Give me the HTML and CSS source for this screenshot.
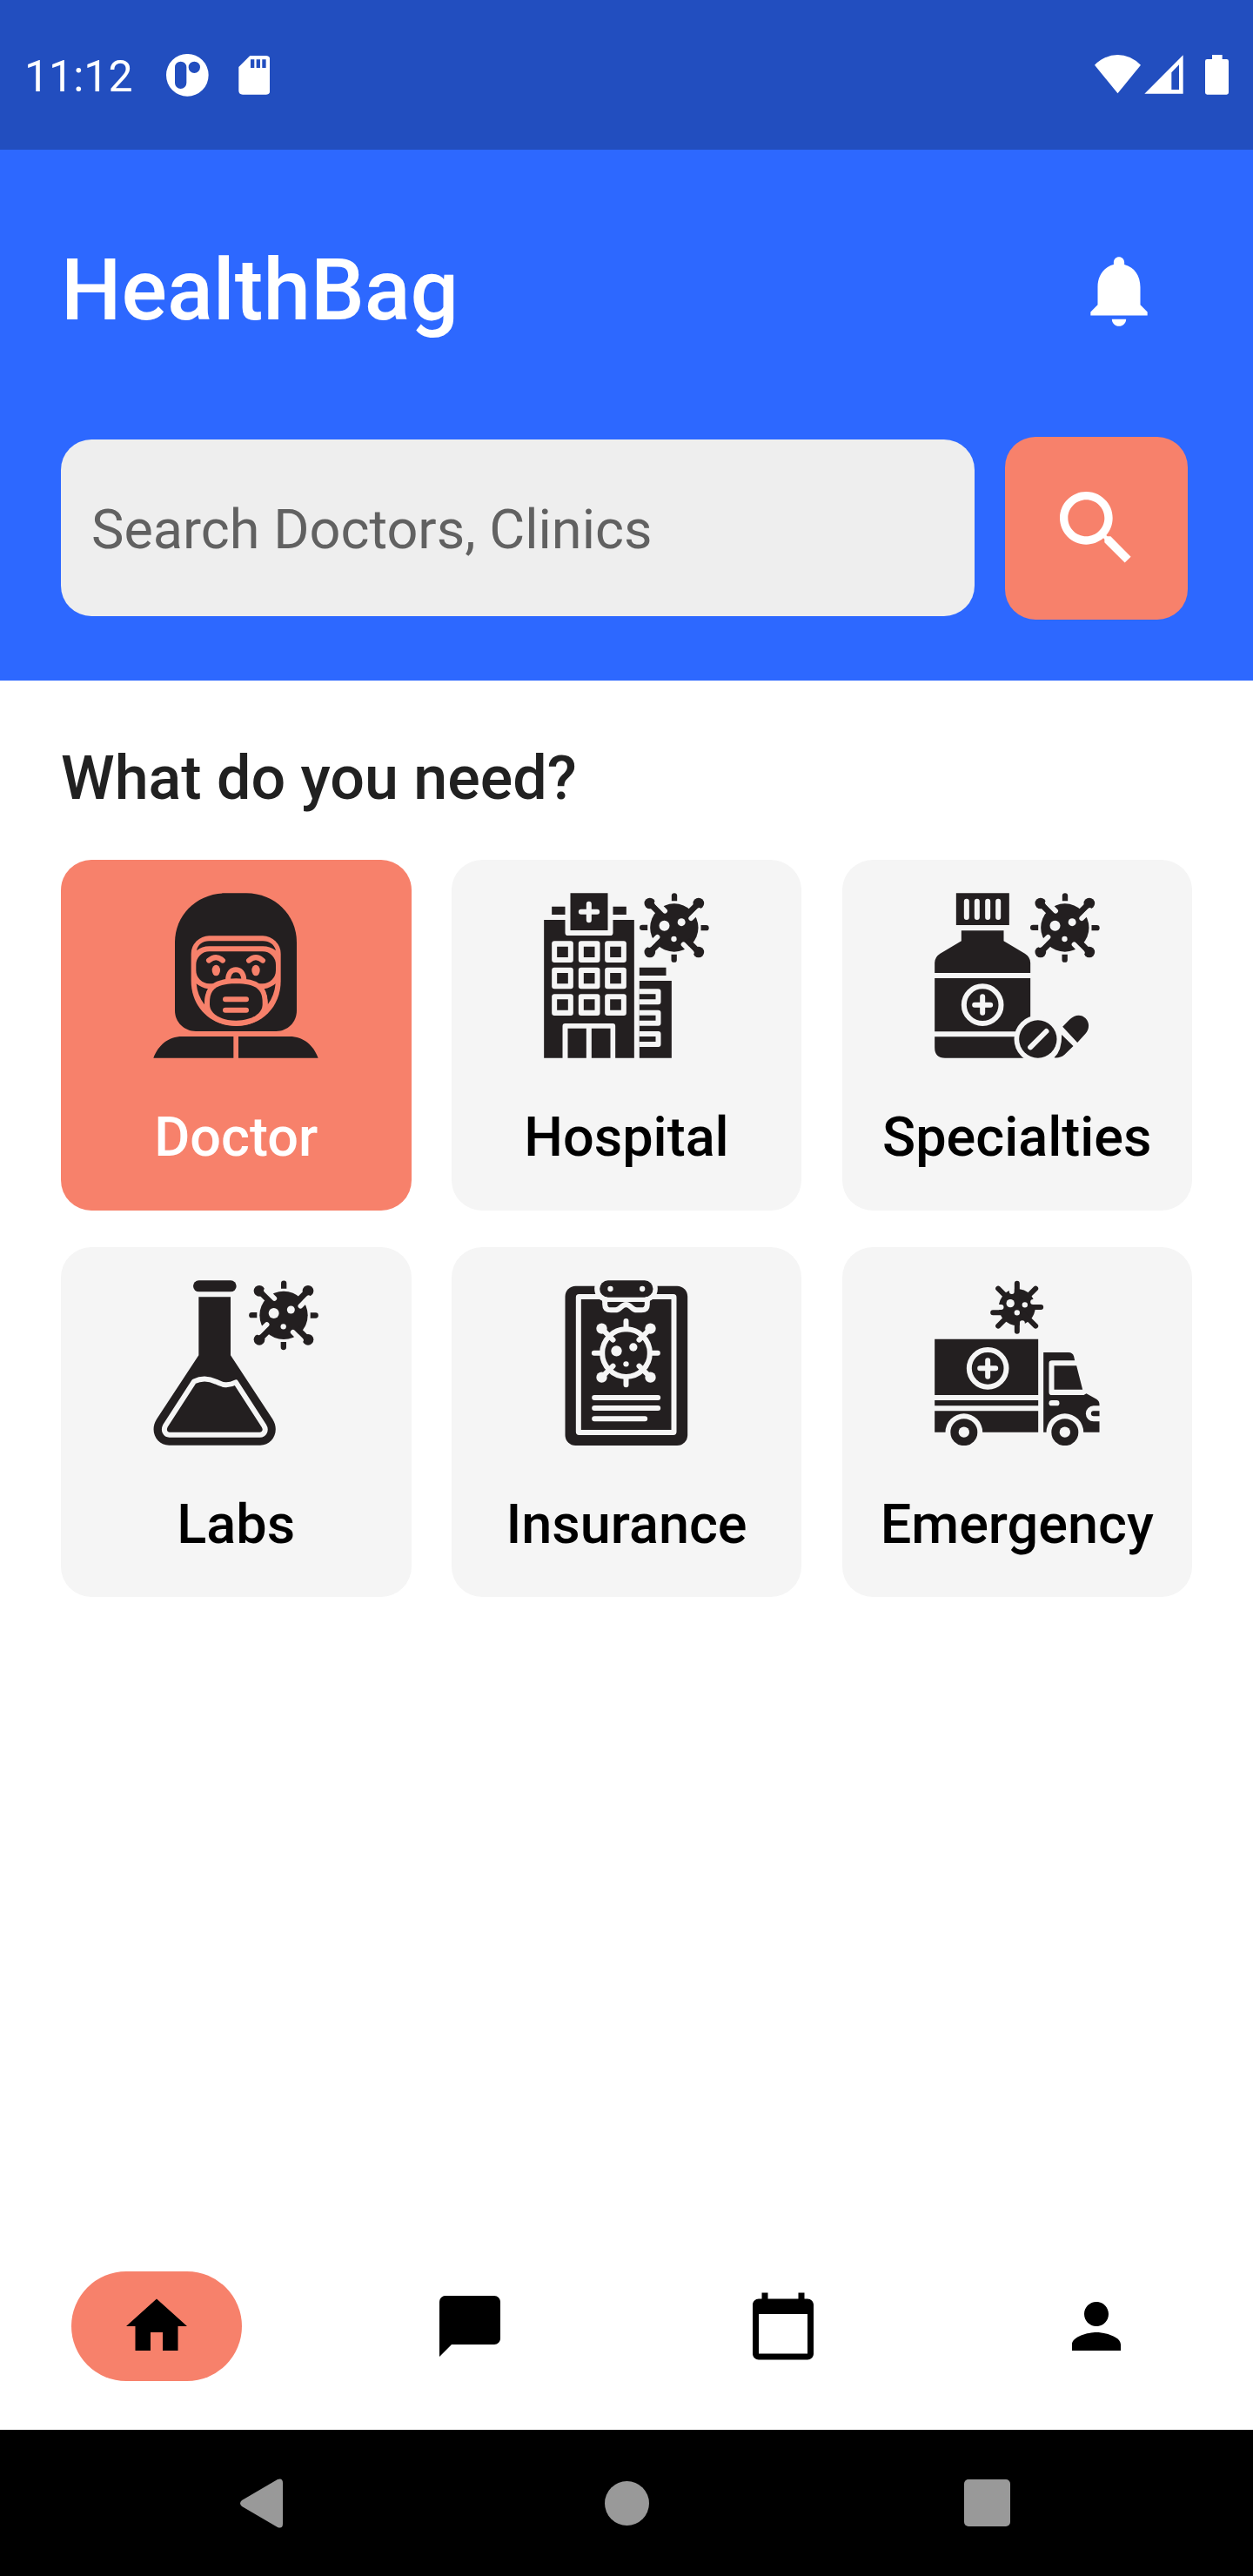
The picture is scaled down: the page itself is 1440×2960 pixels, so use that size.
FILE: index.html
```html
<!DOCTYPE html>
<html lang="en">
<head>
<meta charset="utf-8">
<title>HealthBag</title>
<link rel="stylesheet" href="styles.css">
</head>
<body>
<svg class="defs" aria-hidden="true">
  <defs>
    <g id="spike">
      <circle cx="-84" cy="-84" r="19"/>
      <path class="stem" d="M-84-84L-45-45"/>
      <path class="notch" d="M-60-86L-32-58"/>
      <path d="M-9-92V-110a9.500 9.500 0 0 1 19 0V-92z"/>
    </g>
    <g id="virus">
      <circle r="83"/>
      <use href="#spike"/>
      <use href="#spike" transform="rotate(90)"/>
      <use href="#spike" transform="rotate(180)"/>
      <use href="#spike" transform="rotate(270)"/>
      <g class="cut"><circle cx="-34" cy="-7" r="18"/><circle cx="25" cy="-19" r="13.500"/><circle cx="-1" cy="39" r="9.500"/></g>
    </g>
  </defs>
</svg>

<div class="status">
  <span class="clock">11:12</span>
  <svg class="status-left" viewBox="573 96 358 147">
    <path fill-rule="evenodd" d="M573 169a73 73 0 1 0 146 0a73 73 0 1 0-146 0zM603 142a20 20 0 0 1 40 0V196a20 20 0 0 1-40 0zM650 142a20 20 0 1 0 40 0a20 20 0 1 0-40 0z"/>
    <path fill-rule="evenodd" d="M862 102H917q14 0 14 14V222q0 14-14 14H837q-14 0-14-14V141zM864 115V144H877V115zM884 115V144H897V115zM904 115V144H917V115z"/>
  </svg>
  <svg class="status-right" viewBox="114 99 462 137">
    <path d="M114 134Q150 99 193.500 99T273 134L193.500 232z"/>
    <path fill-rule="evenodd" d="M286 233L419 100V233zM379 160V219H405V133z"/>
    <path d="M519 99H554V114H569q7 0 7 7V229q0 7-7 7H502q-7 0-7-7V121q0-7 7-7H519z"/>
  </svg>
</div>

<header class="header">
  <div class="title-row">
    <h1 class="title">HealthBag</h1>
    <svg class="bell" viewBox="0 0 24 24"><path d="M12 22c1.100 0 2-.9 2-2h-4c0 1.100.89 2 2 2zm6-6v-5c0-3.070-1.640-5.640-4.500-6.320V4c0-.83-.67-1.500-1.500-1.500s-1.500.67-1.500 1.500v.68C7.630 5.360 6 7.920 6 11v5l-2 2v1h16v-1l-2-2z"/></svg>
  </div>
  <div class="search-row">
    <div class="search-field">Search Doctors, Clinics</div>
    <div class="search-button">
      <svg viewBox="0 0 24 24"><path d="M15.500 14h-.79l-.28-.27C15.410 12.590 16 11.110 16 9.500 16 5.910 13.090 3 9.500 3S3 5.910 3 9.500 5.910 16 9.500 16c1.610 0 3.090-.59 4.230-1.570l.27.28v.79l5 4.990L20.490 19l-4.990-5zm-6 0C7.010 14 5 11.990 5 9.500S7.010 5 9.500 5 14 7.010 14 9.500 11.990 14 9.500 14z"/></svg>
    </div>
  </div>
</header>

<main class="main">
  <h2 class="heading">What do you need?</h2>
  <div class="grid">
    <div class="card card-active">
      <svg class="icon" viewBox="348 137 570 570">
        <path d="M423 307C423 213 499 138 597 138H669C767 138 843 213 843 307V543C843 583 812 614 772 614H495C455 614 423 583 423 543z"/>
        <path d="M349 706C366 662 400 632 448 632H625V706zM642 632H818C866 632 901 662 917 706H642z"/>
        <path class="cut" d="M479 347a62 62 0 0 1 62-62H726a62 62 0 0 1 62 62V440C788 530 722 596 634 596S479 530 479 440z"/>
        <path d="M498 336C502 316 518 303 541 303H726C750 303 766 316 771 336C757 326 743 321 726 321H541C524 321 511 326 498 336z"/>
        <rect x="496" y="339" width="275" height="111" rx="46"/>
        <path d="M497 450Q513 464 538 468Q525 490 525 522Q501 492 497 450zM770 450Q754 464 730 468Q743 490 743 522Q766 492 770 450z"/>
        <path class="line" d="M606 440C606 411 620 402 633 402S661 411 661 440"/>
        <path class="mask" d="M543 515C543 470 565 450 634 450S725 470 725 515V522C725 552 690 577 634 577S543 552 543 522z"/>
        <path class="line" d="M597 504H669M597 541H669M540 370Q565 349 588 370M678 370Q702 349 726 370"/>
        <g class="cut"><ellipse cx="565" cy="404" rx="14" ry="19"/><ellipse cx="702" cy="404" rx="14" ry="19"/></g>
      </svg>
      <span class="label">Doctor</span>
    </div>

    <div class="card">
      <svg class="icon" viewBox="75.500 47 570 570">
        <path d="M76 140H149V184q0 10 10 10H304q10 0 10-10V140H387V616H322V506q0-9-9-9H149q-9 0-9 9V616H76z"/>
        <path d="M158 514h64v102h-64zM240 514h65v102h-65zM167 48h129v128H167zM103 94h46v28h-46zM314 94h46v28h-46zM405 304h92v28h-92zM405 350h111v266H405z"/>
        <path class="line" d="M231 85V141M204 112H259"/>
        <g class="cut">
          <rect x="103" y="213" width="74" height="74" rx="9"/><rect x="195" y="213" width="74" height="74" rx="9"/><rect x="286" y="213" width="74" height="74" rx="9"/>
          <rect x="103" y="304" width="74" height="74" rx="9"/><rect x="195" y="304" width="74" height="74" rx="9"/><rect x="286" y="304" width="74" height="74" rx="9"/>
          <rect x="103" y="396" width="74" height="74" rx="9"/><rect x="195" y="396" width="74" height="74" rx="9"/><rect x="286" y="396" width="74" height="74" rx="9"/>
          <path d="M405 378H470q9 0 9 9V423q0 9-9 9H405zM405 451H470q9 0 9 9V496q0 9-9 9H405zM405 524H470q9 0 9 9V569q0 9-9 9H405z"/>
        </g>
        <path d="M121 232h38v37h-38zM213 232h38v37h-38zM304 232h38v37h-38zM121 323h38v37h-38zM213 323h38v37h-38zM304 323h38v37h-38zM121 414h38v37h-38zM213 414h38v37h-38zM304 414h38v37h-38zM405 396h56v18h-56zM405 469h56v18h-56zM405 542h56v18h-56z"/>
        <use href="#virus" x="525" y="167"/>
      </svg>
      <span class="label">Hospital</span>
    </div>

    <div class="card">
      <svg class="icon" viewBox="71.500 47 570 570">
        <path d="M146 48h183v110H146zM164 177H310V213L383 256Q402 268 402 288V323H72V288Q72 268 91 256L164 213zM72 341h330v184H72zM72 543H402V616H108Q72 616 72 580z"/>
        <path class="line" d="M182 76V131M218 76V131M255 76V131M291 76V131M237 405V460M210 433H264"/>
        <circle class="line" cx="237" cy="433" r="64"/>
        <circle class="cut" cx="428" cy="551" r="82"/>
        <circle cx="428" cy="551" r="65"/>
        <path class="line" d="M402 579L457 524"/>
        <path d="M513 508L538 483C554 466 578 464 592 479C607 494 606 517 592 532L564 563zM510 536L550 575L520 604Q505 617 484 615Q511 590 510 536z"/>
        <use href="#virus" x="521" y="167"/>
      </svg>
      <span class="label">Specialties</span>
    </div>

    <div class="card">
      <svg class="icon" viewBox="78 59 570 570">
        <rect x="216" y="60" width="149" height="39" rx="19.500"/>
        <path d="M235 117H345V318L490 538C516 580 490 628 447 628H133C90 628 64 580 90 538L235 318z"/>
        <path class="line" d="M219 408C250 393 276 400 295 409C318 421 335 425 363 411L460 561C470 577 460 592 446 592H134C120 592 112 577 120 561z"/>
        <use href="#virus" x="528" y="180"/>
      </svg>
      <span class="label">Labs</span>
    </div>

    <div class="card">
      <svg class="icon" viewBox="75.500 59 570 570">
        <rect x="149" y="79" width="422" height="550" rx="36"/>
        <rect class="line" x="195" y="116" width="329" height="468" rx="2"/>
        <rect class="cut" x="250" y="42" width="218" height="93" rx="46"/>
        <path class="cut" d="M277 117H441V134H277z"/>
        <rect x="268" y="60" width="184" height="58" rx="29"/>
        <g class="cut"><circle cx="305" cy="89" r="9.500"/><circle cx="415" cy="89" r="9.500"/></g>
        <path d="M295 134H423V152H295z"/>
        <path class="line" d="M286 125V142Q286 162 306 162H322C340 162 340 144 359 143C378 144 378 162 396 162H412Q432 162 432 142V125"/>
        <circle class="line" cx="359" cy="310" r="82"/>
        <path class="line" d="M359 200V228M359 392V420M249 310H277M441 310H468M275 226L314 265M443 226L404 265M275 394L314 355M443 394L404 355M250 464H469M250 500H469M250 537H424"/>
        <g class="cut">
          <circle cx="275" cy="226" r="18.500"/><circle cx="443" cy="226" r="18.500"/><circle cx="275" cy="394" r="18.500"/><circle cx="443" cy="394" r="18.500"/>
          <circle cx="326" cy="303" r="18.500"/><circle cx="384" cy="290" r="14"/><circle cx="359" cy="348" r="9.500"/>
        </g>
      </svg>
      <span class="label">Insurance</span>
    </div>

    <div class="card">
      <svg class="icon" viewBox="71.500 59 570 570">
        <path d="M72 262h357v193H72zM72 473h357v19H72zM72 510h357v73H72z"/>
        <path d="M447 308H533Q548 308 552 322L555 336H476q-10 0-10 10V445q0 10 10 10H586L595 450L630 469Q640 475 640 487V492H620a27 27 0 0 0 0 54H640V583H447z"/>
        <path d="M484 354H561L582 436H484zM640 510H620a9 9 0 0 0 0 18H640z"/>
        <rect class="cut" x="466" y="473" width="36" height="19" rx="9.500"/>
        <g class="cut"><circle cx="173" cy="583" r="64"/><circle cx="521" cy="583" r="64"/></g>
        <circle cx="173" cy="583" r="46.500"/><circle cx="521" cy="583" r="46.500"/>
        <g class="cut"><circle cx="173" cy="583" r="18.500"/><circle cx="521" cy="583" r="18.500"/></g>
        <circle class="line" cx="255" cy="363" r="64"/>
        <path class="line" d="M255 336V391M228 363H282"/>
        <circle cx="356" cy="152" r="63"/>
        <path class="line" d="M338 78V98M432 134H411M278 152H301M374 228V207"/>
        <path class="prong" d="M356 70V120M356 235V190M438 152H390M273 171H320M291 88L330 127M420 88L380 128M291 217L330 178M420 217L380 177"/>
        <g class="cut"><circle cx="333" cy="139" r="14"/><circle cx="383" cy="144" r="9.500"/><circle cx="356" cy="171" r="9.500"/></g>
      </svg>
      <span class="label">Emergency</span>
    </div>
  </div>
</main>

<nav class="tabs">
  <div class="tab"><span class="pill"><svg viewBox="0 0 24 24"><path d="M10 20v-6h4v6h5v-8h3L12 3 2 12h3v8z"/></svg></span></div>
  <div class="tab"><svg viewBox="0 0 24 24"><path d="M20 2H4c-1.100 0-2 .9-2 2v18l4-4h14c1.100 0 2-.9 2-2V4c0-1.100-.9-2-2-2z"/></svg></div>
  <div class="tab"><svg viewBox="0 0 24 24"><path d="M20 3h-1V1h-2v2H7V1H5v2H4c-1.100 0-2 .9-2 2v16c0 1.100.9 2 2 2h16c1.100 0 2-.9 2-2V5c0-1.100-.9-2-2-2zm0 18H4V8h16v13z"/></svg></div>
  <div class="tab"><svg viewBox="0 0 24 24"><path d="M12 12c2.210 0 4-1.790 4-4s-1.790-4-4-4-4 1.790-4 4 1.790 4 4 4zm0 2c-2.670 0-8 1.340-8 4v2h16v-2c0-2.660-5.330-4-8-4z"/></svg></div>
</nav>

<div class="system-nav">
  <svg width="49" height="57" viewBox="0 0 49 57"><path d="M43 1Q49-1 49 5V52Q49 58 43 56L2 32Q-2 28.500 2 25z"/></svg>
  <svg width="51" height="51" viewBox="0 0 51 51"><circle cx="25.500" cy="25.500" r="25.500"/></svg>
  <svg width="53" height="54" viewBox="0 0 53 54"><rect width="53" height="54" rx="5"/></svg>
</div>
</body>
</html>
```
FILE: styles.css
```css
* { box-sizing: border-box; }
body {
  --bg: #fff;
  display: flex;
  flex-direction: column;
  width: 1440px;
  height: 2960px;
  margin: 0;
  background: #fff;
  font-family: Roboto, "Liberation Sans", sans-serif;
}
svg { display: block; flex: none; }
.defs { position: absolute; width: 0; height: 0; }

.status {
  display: flex;
  align-items: flex-start;
  height: 172px;
  padding: 63px 28px 0;
  background: #224ebf;
  color: #fff;
  fill: #fff;
}
.clock { width: 163px; margin-top: -4px; font-size: 50px; line-height: 58px; }
.status-left { width: 119.300px; height: 49px; margin-top: -1px; }
.status-right { width: 154px; height: 45.700px; margin-left: auto; }

.header {
  height: 609.500px;
  padding: 113px 75px 0 70px;
  background: #2d68ff;
}
.title-row {
  display: flex;
  justify-content: space-between;
  align-items: center;
  height: 98px;
  padding-right: 30px;
}
.title { margin: 0; color: #fff; font-size: 98px; font-weight: 500; line-height: 98px; }
.bell { width: 98px; height: 98px; fill: #fff; }
.search-row {
  display: flex;
  align-items: center;
  gap: 35px;
  margin-top: 118.500px;
}
.search-field {
  flex: 1;
  height: 203px;
  padding: 4px 35px 0;
  border-radius: 35px;
  background: #eee;
  color: #616161;
  font-size: 63px;
  line-height: 199px;
}
.search-button {
  display: flex;
  align-items: center;
  justify-content: center;
  width: 210px;
  height: 210px;
  border-radius: 35px;
  background: #f7816b;
}
.search-button svg { width: 112px; height: 112px; fill: #fff; }

.main { flex: 1; padding: 71.500px 70px 0; }
.heading {
  margin: 0 0 53px;
  color: #212121;
  font-size: 70px;
  font-weight: 500;
  line-height: 82px;
}
.grid {
  display: grid;
  grid-template-columns: repeat(3, 402.500px);
  justify-content: space-between;
  row-gap: 42px;
}
.card {
  --bg: #f5f5f5;
  display: flex;
  flex-direction: column;
  align-items: center;
  height: 402.500px;
  padding-top: 38px;
  border-radius: 35px;
  background: var(--bg);
  color: #000;
}
.card-active { --bg: #f7816b; color: #fff; }
.icon { width: 190px; height: 190px; fill: #231f20; }
.label { margin-top: 54px; font-size: 63px; font-weight: 500; line-height: 74px; }

.cut { fill: var(--bg); }
.line { fill: none; stroke: var(--bg); stroke-width: 18; stroke-linecap: round; stroke-linejoin: round; }
.stem { stroke: #231f20; stroke-width: 21; }
.notch { stroke: var(--bg); stroke-width: 17; stroke-linecap: round; }
.prong { stroke: #231f20; stroke-width: 18; stroke-linecap: round; }
.mask { stroke: var(--bg); stroke-width: 36; paint-order: stroke; }

.tabs {
  display: grid;
  grid-template-columns: repeat(4, 1fr);
  height: 238px;
  align-items: center;
}
.tab { display: flex; justify-content: center; }
.tab svg { width: 84px; height: 84px; fill: #000; }
.pill {
  display: flex;
  align-items: center;
  justify-content: center;
  width: 196px;
  height: 126px;
  border-radius: 63px;
  background: #f7816b;
}

.system-nav {
  display: grid;
  grid-template-columns: 49px 51px 53px;
  column-gap: 369.500px 0;
  column-gap: 0;
  grid-template-columns: 418.500px 413.500px 53px;
  align-items: center;
  height: 168px;
  padding-left: 276px;
  background: #000;
  fill: #999;
}
```
